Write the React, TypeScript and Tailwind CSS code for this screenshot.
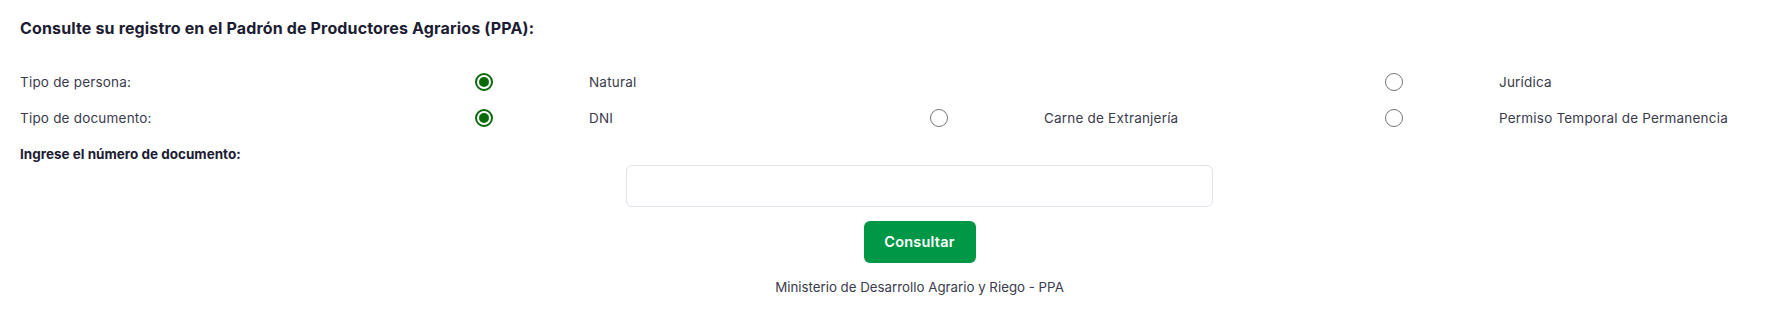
import { useState } from "react";

type Opt = { id: string; label: string };

const personas: Opt[] = [
  { id: "natural", label: "Natural" },
  { id: "", label: "" },
  { id: "juridica", label: "Jurídica" },
];

const documentos: Opt[] = [
  { id: "dni", label: "DNI" },
  { id: "ce", label: "Carne de Extranjería" },
  { id: "ptp", label: "Permiso Temporal de Permanencia" },
];

function Radio({ checked }: { checked: boolean }) {
  if (checked) {
    return (
      <span className="flex h-[18px] w-[18px] items-center justify-center rounded-full border-2 border-[#0b6b0b]">
        <span className="h-[10px] w-[10px] rounded-full bg-[#0b6b0b]" />
      </span>
    );
  }
  return <span className="h-[18px] w-[18px] rounded-full border-[1.5px] border-[#767676]" />;
}

function RadioRow({
  title,
  options,
  value,
  onChange,
}: {
  title: string;
  options: Opt[];
  value: string;
  onChange: (v: string) => void;
}) {
  return (
    <div className="grid h-9 grid-cols-[393px_142px_313px_142px_313px_142px_313px] items-center">
      <span>{title}</span>
      {options.map((o, i) =>
        o.id ? (
          <label key={o.id} className="contents cursor-pointer" onClick={() => onChange(o.id)}>
            <span className="flex justify-center">
              <Radio checked={value === o.id} />
            </span>
            <span className="pl-[34px]">{o.label}</span>
          </label>
        ) : (
          <span key={"empty" + i} className="col-span-2" />
        )
      )}
    </div>
  );
}

export default function App() {
  const [persona, setPersona] = useState("natural");
  const [doc, setDoc] = useState("dni");
  const [numero, setNumero] = useState("");

  return (
    <div
      className="min-h-screen bg-white pl-5 pt-4 text-[13.5px] tracking-[0.2px] text-[#3b3b4d]"
      style={{ fontFamily: "Inter, 'Open Sans', sans-serif" }}
    >
      <h1 className="mb-6 text-base leading-6 font-bold tracking-[0.15px] text-[#1c1c33]">
        Consulte su registro en el Padrón de Productores Agrarios (PPA):
      </h1>

      <RadioRow title="Tipo de persona:" options={personas} value={persona} onChange={setPersona} />
      <RadioRow title="Tipo de documento:" options={documentos} value={doc} onChange={setDoc} />

      <p className="mt-2 leading-5 font-bold tracking-normal text-[#1c1c33]">Ingrese el número de documento:</p>

      <div className="flex flex-col items-center pl-[41px]">
        <input
          value={numero}
          onChange={(e) => setNumero(e.target.value)}
          className="mt-px h-[42px] w-[587px] rounded-md border border-[#e2e1ee] px-3 outline-none"
        />
        <button className="mt-[14px] h-[42px] w-[112px] rounded-md bg-[#009846] text-[14.5px] font-semibold text-white">
          Consultar
        </button>
        <p className="mt-[14px] text-[13.3px] leading-5 tracking-normal">
          Ministerio de Desarrollo Agrario y Riego - PPA
        </p>
      </div>
    </div>
  );
}
